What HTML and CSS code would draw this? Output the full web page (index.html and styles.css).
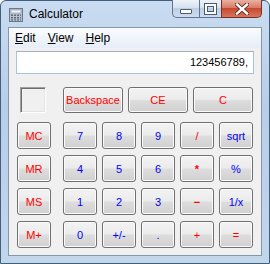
FILE: index.html
```html
<!DOCTYPE html>
<html lang="en">
<head>
  <meta charset="UTF-8">
  <title>Calculator</title>
  <link rel="stylesheet" href="styles.css">
</head>
<body>

  <div class="window">
    <div class="titlebar">
      <svg class="app-icon" width="14" height="14" viewBox="0 0 14 14">
        <rect x="0.5" y="0.5" width="13" height="13" fill="#b9c3cf" stroke="#6b7786"/>
        <rect x="2" y="2" width="10" height="3" fill="#eef3f8" stroke="#8c98a6" stroke-width="0.6"/>
        <g fill="#5f6c7c">
          <rect x="2" y="6.5" width="2" height="1.5"/><rect x="5" y="6.5" width="2" height="1.5"/><rect x="8" y="6.5" width="2" height="1.5"/><rect x="11" y="6.5" width="1" height="1.5"/>
          <rect x="2" y="9" width="2" height="1.5"/><rect x="5" y="9" width="2" height="1.5"/><rect x="8" y="9" width="2" height="1.5"/><rect x="11" y="9" width="1" height="1.5"/>
          <rect x="2" y="11.3" width="2" height="1.2"/><rect x="5" y="11.3" width="2" height="1.2"/><rect x="8" y="11.3" width="2" height="1.2"/><rect x="11" y="11.3" width="1" height="1.2"/>
        </g>
      </svg>
      <span class="title">Calculator</span>
      <div class="caption">
        <div class="cap min"><span class="min-glyph"></span></div>
        <div class="cap max"><span class="max-glyph"></span></div>
        <div class="cap close">
          <svg width="14" height="12" viewBox="0 0 14 12">
            <path d="M2 1.5 L12 10.5 M12 1.5 L2 10.5" stroke="#5a2a20" stroke-width="4.2" stroke-linecap="square"/>
            <path d="M2 1.5 L12 10.5 M12 1.5 L2 10.5" stroke="#ffffff" stroke-width="2.4" stroke-linecap="square"/>
          </svg>
        </div>
      </div>
    </div>

    <div class="client">
      <div class="menubar">
        <span class="menu-item"><u>E</u>dit</span>
        <span class="menu-item"><u>V</u>iew</span>
        <span class="menu-item"><u>H</u>elp</span>
      </div>

      <div class="display">123456789,</div>

      <div class="top-row">
        <div class="mem-slot"><div class="mem-box"></div></div>
        <button class="key wide red">Backspace</button>
        <button class="key wide red">CE</button>
        <button class="key wide red">C</button>
      </div>

      <div class="keys">
        <button class="key red">MC</button>
        <button class="key blue">7</button>
        <button class="key blue">8</button>
        <button class="key blue">9</button>
        <button class="key red">/</button>
        <button class="key blue">sqrt</button>

        <button class="key red">MR</button>
        <button class="key blue">4</button>
        <button class="key blue">5</button>
        <button class="key blue">6</button>
        <button class="key red bold">*</button>
        <button class="key blue">%</button>

        <button class="key red">MS</button>
        <button class="key blue">1</button>
        <button class="key blue">2</button>
        <button class="key blue">3</button>
        <button class="key red bold">&minus;</button>
        <button class="key blue">1/x</button>

        <button class="key red">M+</button>
        <button class="key blue">0</button>
        <button class="key blue">+/-</button>
        <button class="key blue">.</button>
        <button class="key red">+</button>
        <button class="key red">=</button>
      </div>
    </div>
  </div>

</body>
</html>
```

FILE: styles.css
```css
body {
  margin: 0;
  font-family: "Liberation Sans", Arial, sans-serif;
  background: #ffffff;
}

.window {
  width: 270px;
  height: 264px;
  box-sizing: border-box;
  border: 1px solid #40607e;
  border-radius: 6px 6px 0 0;
  background: linear-gradient(#c9dcf1, #b8cee7 40%, #c2d6ec);
  display: flex;
  flex-direction: column;
}

.titlebar {
  height: 26px;
  display: flex;
  align-items: flex-start;
  padding-left: 8px;
  padding-right: 7px;
}

.app-icon {
  margin-top: 7px;
  margin-right: 6px;
}

.title {
  font-size: 12px;
  line-height: 14px;
  margin-top: 6px;
  color: #000;
}

.caption {
  margin-left: auto;
  margin-top: -1px;
  display: flex;
  height: 18px;
}

.cap {
  box-sizing: border-box;
  height: 18px;
  border: 1px solid #5f7591;
  border-top: none;
  display: flex;
  align-items: center;
  justify-content: center;
}

.min {
  width: 27px;
  border-radius: 0 0 0 5px;
  border-right: none;
  background: linear-gradient(#eef3f9, #d7e2ef 45%, #bfcfe3 50%, #cddcee);
}

.max {
  width: 22px;
  border-right: none;
  background: linear-gradient(#eef3f9, #d7e2ef 45%, #bfcfe3 50%, #cddcee);
}

.close {
  width: 41px;
  border-color: #7a2f22;
  border-radius: 0 0 5px 0;
  background: linear-gradient(#eab1a3, #d97b66 45%, #c64a31 50%, #d7765a);
}

.min-glyph {
  width: 10px;
  height: 3px;
  margin-top: 5px;
  background: #fff;
  border: 1px solid #4b5b70;
  border-radius: 1px;
}

.max-glyph {
  width: 7px;
  height: 6px;
  border: 2px solid #fff;
  border-top-width: 2px;
  outline: 1px solid #4b5b70;
  box-shadow: inset 0 0 0 1px #4b5b70;
}

.client {
  flex: 1;
  margin: 0 7px 7px;
  border: 1px solid #8397ad;
  background: #f0f0f0;
}

.menubar {
  height: 20px;
  padding-left: 0;
  display: flex;
  align-items: center;
  font-size: 12px;
  background: linear-gradient(#fbfcfe, #e6edf7);
}

.menu-item {
  padding: 0 6px;
}

.display {
  margin: 3px 7px 0;
  height: 23px;
  box-sizing: border-box;
  border: 1px solid #a7c2e2;
  border-top-color: #9fb0c4;
  background: #fff;
  text-align: right;
  padding-right: 5px;
  font-size: 11px;
  line-height: 21px;
  color: #000;
}

.top-row {
  display: flex;
  gap: 5px;
  margin-top: 13px;
  padding-left: 8px;
  height: 26px;
}

.mem-slot {
  width: 41px;
  display: flex;
}

.mem-box {
  width: 26px;
  height: 26px;
  margin-left: 3px;
  box-sizing: border-box;
  border: 1px solid;
  border-color: #a0a0a0 #ffffff #ffffff #a0a0a0;
  box-shadow: inset 1px 1px 0 #6e6e6e, inset -1px -1px 0 #e3e3e3;
}

.keys {
  display: grid;
  grid-template-columns: 41px repeat(5, 34px);
  grid-auto-rows: 27px;
  column-gap: 5px;
  row-gap: 6px;
  margin-top: 9px;
  padding-left: 8px;
}

.key {
  width: 34px;
  height: 27px;
  box-sizing: border-box;
  margin: 0;
  padding: 0;
  border: 1px solid #707070;
  border-radius: 3px;
  background: linear-gradient(#f3f3f3, #ebebeb 48%, #dddddd 52%, #d0d0d0);
  box-shadow: inset 0 0 0 1px #fbfbfb;
  font-family: "Liberation Sans", Arial, sans-serif;
  font-size: 11px;
  text-align: center;
}

.key.wide {
  width: 60px;
  height: 26px;
}

.red {
  color: #ff0000;
}

.blue {
  color: #0000ff;
}

.bold {
  font-weight: bold;
}
```
